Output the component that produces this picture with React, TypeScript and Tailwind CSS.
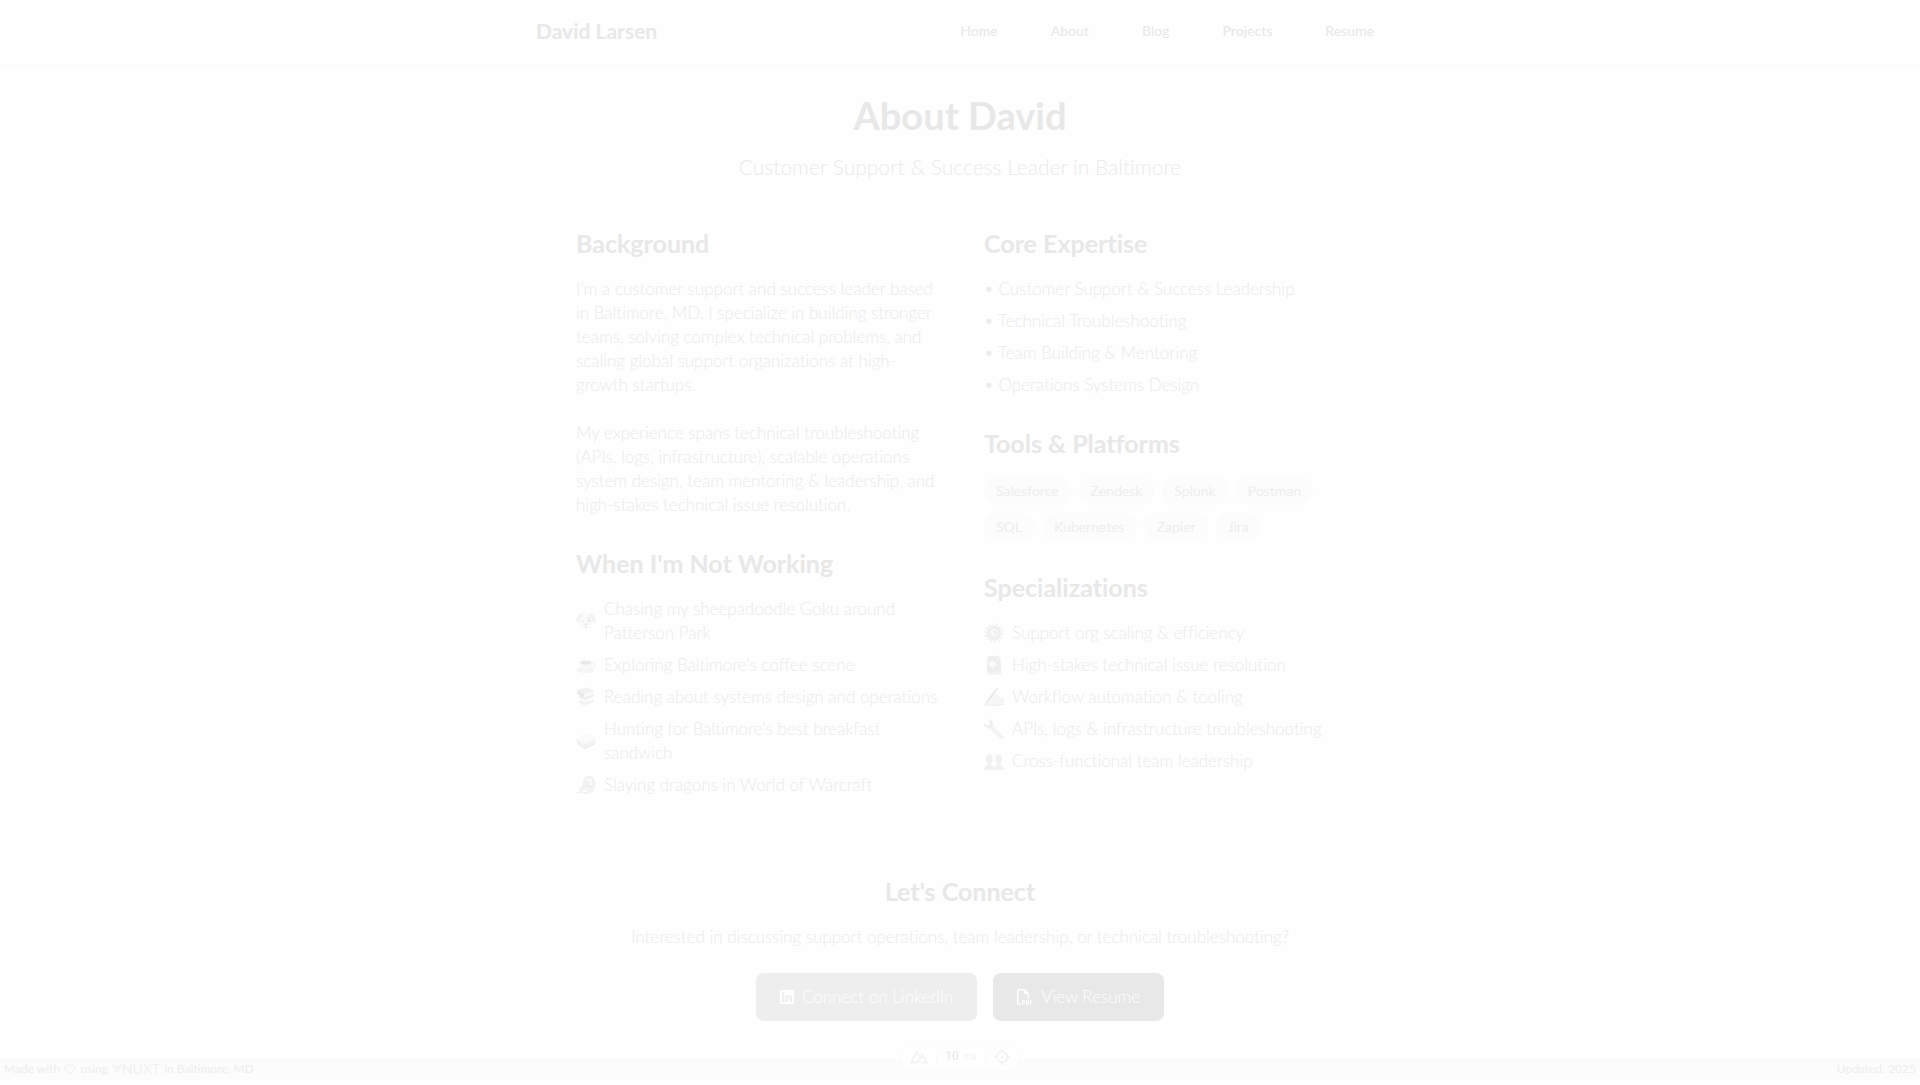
import React from "react";
import { Heart } from "lucide-react";
import { FaLinkedin, FaRegFilePdf } from "react-icons/fa6";

const nav = ["Home", "About", "Blog", "Projects", "Resume"];
const expertise = [
  "Customer Support & Success Leadership",
  "Technical Troubleshooting",
  "Team Building & Mentoring",
  "Operations Systems Design",
];
const tools = ["Salesforce", "Zendesk", "Splunk", "Postman", "SQL", "Kubernetes", "Zapier", "Jira"];

const Svg = ({ children }: { children: React.ReactNode }) => (
  <svg viewBox="0 0 20 20" className="size-5 shrink-0" aria-hidden="true">
    {children}
  </svg>
);

const Dog = () => (
  <Svg>
    <ellipse cx="10" cy="9.500" rx="7" ry="7" fill="#fafafa" stroke="#f6f6f6" strokeWidth=".6" />
    <path d="M5.500 2.500C2.500 3 0 7 .3 10c.3 1.500 2 1.700 2.900.3C4 8.500 5 5 6.500 3.200 6.300 2.700 6 2.500 5.500 2.500zM14.500 2.500c3 .5 5.500 4.500 5.200 7.500-.3 1.500-2 1.700-2.900.3C16 8.500 15 5 13.500 3.200c.2-.5.500-.7 1-.7z" fill="#f2f2f2" />
    <ellipse cx="13" cy="8.500" rx="2.200" ry="3" fill="#f2f2f2" />
    <circle cx="6.800" cy="10" r="1" fill="#e9e9e9" />
    <circle cx="13.200" cy="10" r="1" fill="#e8e8e8" />
    <ellipse cx="10" cy="13.300" rx="1.700" ry="1" fill="#e8e8e8" />
    <path d="M8.500 15h3c0 3.500-3 3.500-3 0z" fill="#efefef" />
  </Svg>
);
const Coffee = () => (
  <Svg>
    <path d="M8 1c2 1-1 2 1 3" fill="none" stroke="#f9f9f9" />
    <ellipse cx="9.500" cy="15" rx="9.300" ry="3" fill="#f5f5f5" />
    <path d="M15 8.500c6-1 4 5-1 5" fill="none" stroke="#f4f4f4" strokeWidth="1.500" />
    <path d="M3.500 7h12.500c0 5-2.500 9-6.300 9s-6.200-4-6.200-9z" fill="#f8f8f8" />
    <ellipse cx="9.700" cy="7.500" rx="6.200" ry="2.200" fill="#f2f2f2" />
    <ellipse cx="9.700" cy="7.800" rx="5" ry="1.500" fill="#e7e7e7" />
  </Svg>
);
const Books = () => (
  <Svg>
    <path d="M1 3l10-2.500L18 3.500 8 7z" fill="#f1f1f1" />
    <path d="M1 3l7 4v3.500L1 6.500z" fill="#e9e9e9" />
    <path d="M8 7l10-3.500-1 3L8 10.500z" fill="#f8f8f8" />
    <path d="M3 8l5 3 9-3.500 1.500 1L8.500 13 3 10z" fill="#ebebeb" />
    <path d="M3.500 11l5 3 9-3.500-.5 2-8.500 3.500-5-3z" fill="#f8f8f8" />
    <path d="M3.500 13.500l5 2.500 9.500-3v2l-10 4-5-3.500z" fill="#efefef" />
    <path d="M4 16l4.500 2 9-3" stroke="#f9f9f9" fill="none" />
  </Svg>
);
const Sandwich = () => (
  <Svg>
    <path d="M.5 8C2 6 9 3 12 3s7 3 7.500 4.500L8 13z" fill="#fafafa" />
    <path d="M.5 8L8 13l11.500-5.500v2L8 15 .5 10z" fill="#f4f4f4" />
    <path d="M.5 10L8 15l11.500-5.500-1 4L8.500 18.500 1.500 13.500z" fill="#ececec" />
    <path d="M1 12.500l7.500 4L19 11" stroke="#f6f6f6" fill="none" strokeWidth="1.200" />
  </Svg>
);
const Dragon = () => (
  <Svg>
    <path d="M7 7C7 3 10 .8 14 1c4 .5 6 5 5.500 9.500-.5 4.500-3.500 7.500-7 8-3 .5-3.500-.8-2-2.500l1-3c-2 2-3.500 3-5.500 3-2 .3-3 0-3-1.500C3.500 13 5 13 6 11z" fill="#f3f3f3" />
    <path d="M9 8c-1-3 2-6 5-5.500s4 4 2.500 7c-1 2-4 2-4.500.5" fill="#fafafa" stroke="#ededed" />
    <path d="M9.500 6.500l3 1.500-1.500 3 3 1M1 18c3-1.500 6-1.500 10 .5" fill="none" stroke="#eaeaea" strokeWidth="1.200" />
  </Svg>
);
const Gear = () => (
  <Svg>
    <circle cx="10" cy="10" r="8.500" fill="none" stroke="#f1f1f1" strokeWidth="2.500" strokeDasharray="1.600 2.215" />
    <circle cx="10" cy="10" r="5.500" fill="none" stroke="#f0f0f0" strokeWidth="4" />
    <circle cx="10" cy="10" r="3.300" fill="#f8f8f8" />
    <path d="M9.500 8.500c3-1 3 3 .5 3" fill="none" stroke="#e8e8e8" />
  </Svg>
);
const Siren = () => (
  <Svg>
    <path d="M2.500 16h15l-.5 3Q10 20.700 3 19z" fill="#f3f3f3" />
    <path d="M3.500 3Q4 .8 10 .8T16.500 3l.7 13Q10 18 2.800 16z" fill="#eee" />
    <path d="M8 4l1.300 3 3.200-1-1 3 2 2-3 .3L9 14l-1.500-2.500-3 .5 1.500-3-1.500-2.500 3 .5z" fill="#fafafa" />
    <circle cx="14" cy="3.800" r="1.300" fill="#f9f9f9" />
  </Svg>
);
const Writing = () => (
  <Svg>
    <path d="M4 10l4-3.500 4 .5 4 3 4 2v5.500l-8 1H3l-1-2 4-1-3.500-1.500z" fill="#f6f6f6" />
    <path d="M3 17.500l9 1 8-1.500" stroke="#eee" fill="none" />
    <path d="M13 .8L14 1.500 6.500 12 .5 19 0 18.500 4.500 12z" fill="#e5e5e5" />
  </Svg>
);
const Wrench = () => (
  <Svg>
    <path d="M4 .5l3 .5 2 2.500L9 7l10.500 10.500-.5 2-2 .3L6.500 9.500 3 9 .5 7 0 4l3 2.500 2.500-.5.500-2.500z" fill="#efefef" />
    <path d="M8 8l9.500 9.500" stroke="#f8f8f8" strokeWidth="1.200" />
    <circle cx="17.700" cy="18" r=".8" fill="#fbfbfb" />
  </Svg>
);
const People = () => (
  <Svg>
    <path d="M0 19c0-3 1-4 3.800-5v-1C.8 10 .8 3.500 5.300 3.500S9.300 10 7 13v1c2.500 1 3 2 3 5zM10 19c0-3 .5-4 3-5v-1c-2.500-3-2.500-9.500 1.700-9.500S19.200 10 16.200 13v1c2.800 1 3.800 2 3.800 5z" fill="#f1f1f1" />
  </Svg>
);

const NuxtMark = () => (
  <svg viewBox="0 0 12 12" className="h-3 w-[10px]" fill="none" stroke="currentColor" strokeWidth="1.200" aria-hidden="true">
    <path d="M.6 1.500h2L6 7.500l3.400-6h2L6 11z" />
    <path d="M4 1.500l2 3.300 2-3.300" />
  </svg>
);

const Mountains = () => (
  <svg viewBox="0 0 18 14" className="h-[14px] w-[18px]" fill="none" stroke="#f3f3f3" strokeWidth="1.800" strokeLinejoin="round" aria-hidden="true">
    <path d="M7.500 12.500H1L6.800 2l3.400 5.800-2.700 4.700" />
    <path d="M10.500 12.500H17L12.600 5l-2.400 4" />
  </svg>
);

const Target = () => (
  <svg viewBox="0 0 16 16" className="size-4" fill="none" stroke="#f1f1f1" strokeWidth="1.500" aria-hidden="true">
    <circle cx="8" cy="8" r="5.300" />
    <path d="M8 0v3M8 13v3M0 8h3M13 8h3" />
    <circle cx="8" cy="8" r="1.200" fill="#f1f1f1" stroke="none" />
  </svg>
);

const hobbies = [
  { icon: <Dog />, text: "Chasing my sheepadoodle Goku around Patterson Park" },
  { icon: <Coffee />, text: "Exploring Baltimore's coffee scene" },
  { icon: <Books />, text: "Reading about systems design and operations" },
  { icon: <Sandwich />, text: "Hunting for Baltimore's best breakfast sandwich" },
  { icon: <Dragon />, text: "Slaying dragons in World of Warcraft" },
];
const specializations = [
  { icon: <Gear />, text: "Support org scaling & efficiency" },
  { icon: <Siren />, text: "High-stakes technical issue resolution" },
  { icon: <Writing />, text: "Workflow automation & tooling" },
  { icon: <Wrench />, text: "APIs, logs & infrastructure troubleshooting" },
  { icon: <People />, text: "Cross-functional team leadership" },
];

const Heading = ({ children }: { children: React.ReactNode }) => (
  <h2 className="mb-5 text-[25px] leading-7 font-bold text-[#e8e8e8]">{children}</h2>
);

const Section = ({ title, children }: { title: string; children: React.ReactNode }) => (
  <section>
    <Heading>{title}</Heading>
    {children}
  </section>
);

const IconList = ({ items }: { items: { icon: React.ReactNode; text: string }[] }) => (
  <ul className="flex flex-col gap-2">
    {items.map((item) => (
      <li key={item.text} className="flex items-center gap-2">
        {item.icon}
        <span>{item.text}</span>
      </li>
    ))}
  </ul>
);

export default function App() {
  return (
    <div className="flex min-h-screen flex-col bg-[#fefefe] pb-[5px] font-['Lato','Liberation_Sans',sans-serif] text-[17px] leading-6 font-light text-[#ebebeb] [font-variant-ligatures:none]">
      <header className="border-b border-[#fbfbfb]">
        <div className="mx-auto flex h-16 w-full max-w-4xl items-center justify-between px-6 pb-0.5">
          <a href="#" className="text-[21px] font-bold text-[#e8e8e8]">David Larsen</a>
          <nav className="flex gap-[33px]">
            {nav.map((item) => (
              <a key={item} href="#" className="px-[10px] text-[14px] font-medium text-[#e9e9e9]">{item}</a>
            ))}
          </nav>
        </div>
      </header>

      <main className="mx-auto w-full max-w-3xl flex-1">
        <div className="mt-8 mb-12 text-center">
          <h1 className="mb-5 text-[38px] leading-9 font-bold text-[#e8e8e8]">About David</h1>
          <p className="text-[21px] leading-7">Customer Support &amp; Success Leader in Baltimore</p>
        </div>

        <div className="grid grid-cols-[1fr_360px] gap-10">
          <div className="flex flex-col gap-8">
            <Section title="Background">
              <p className="mb-6">
                I'm a customer support and success leader based in Baltimore, MD. I specialize in building stronger
                teams, solving complex technical problems, and scaling global support organizations at high-growth
                startups.
              </p>
              <p>
                My experience spans technical troubleshooting (APIs, logs, infrastructure), scalable operations system
                design, team mentoring &amp; leadership, and high-stakes technical issue resolution.
              </p>
            </Section>
            <Section title="When I'm Not Working">
              <IconList items={hobbies} />
            </Section>
          </div>
          <div className="flex flex-col gap-8">
            <Section title="Core Expertise">
              <ul className="flex flex-col gap-2">
                {expertise.map((item) => (
                  <li key={item}>• {item}</li>
                ))}
              </ul>
            </Section>
            <Section title="Tools & Platforms">
              <ul className="flex flex-wrap gap-2">
                {tools.map((tool) => (
                  <li key={tool} className="rounded-full bg-[#fcfcfc] px-3 py-1 text-[14px] leading-5 font-normal text-[#eee]">{tool}</li>
                ))}
              </ul>
            </Section>
            <Section title="Specializations">
              <IconList items={specializations} />
            </Section>
          </div>
        </div>

        <section className="mt-20 text-center">
          <Heading>Let's Connect</Heading>
          <p className="mb-6">Interested in discussing support operations, team leadership, or technical troubleshooting?</p>
          <div className="flex justify-center gap-4">
            <a href="#" className="flex h-12 items-center gap-2 rounded-lg bg-[#eee] px-6 text-[#fefefe]">
              <FaLinkedin className="h-4 w-[14px]" />
              Connect on LinkedIn
            </a>
            <a href="#" className="flex h-12 items-center gap-2 rounded-lg bg-[#e8e8e8] px-6 text-[#fefefe]">
              <FaRegFilePdf className="size-4" />
              View Resume
            </a>
          </div>
        </section>
      </main>

      <footer className="flex h-[21px] items-center justify-between border-t border-[#fafafa] bg-[#fcfcfc] px-1 pb-0.5 text-[12px] font-normal text-[#eee]">
        <p className="flex items-center gap-1">
          Made with
          <Heart className="size-3" strokeWidth={2} />
          using
          <a href="#" aria-label="Nuxt" className="flex items-center text-[14px] text-[#f1f1f1]">
            <NuxtMark />
            NUXT
          </a>
          in Baltimore, MD
        </p>
        <p>Updated: 2025</p>
      </footer>

      <div className="fixed bottom-[14px] left-1/2 flex h-[29px] w-[118px] -translate-x-1/2 items-center justify-between rounded-full bg-[#fefefe] px-[9px] font-['Roboto',sans-serif] font-normal shadow-[0_0_3px_#f8f8f8]">
        <button type="button" aria-label="Open devtools">
          <Mountains />
        </button>
        <span className="h-[10px] w-px bg-[#f9f9f9]" />
        <span className="flex items-baseline gap-1 text-[12px] leading-4 text-[#e6e6e6]">
          10
          <span className="text-[10px] text-[#f3f3f3]">ms</span>
        </span>
        <span className="h-[10px] w-px bg-[#f9f9f9]" />
        <button type="button" aria-label="Inspect component">
          <Target />
        </button>
      </div>
    </div>
  );
}
